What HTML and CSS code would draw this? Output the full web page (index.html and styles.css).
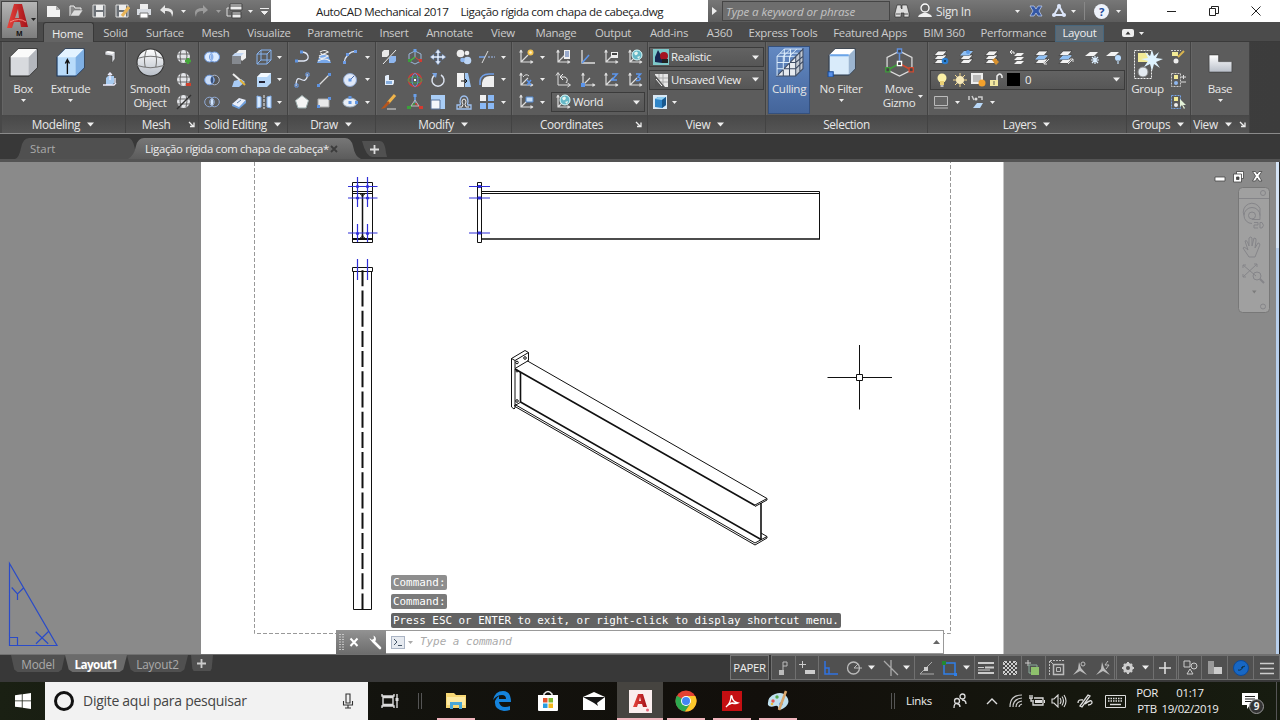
FILE: index.html
```
<!DOCTYPE html>
<html lang="pt-BR">
<head>
  <meta charset="UTF-8">
  <title>AutoCAD Mechanical 2017</title>
  <link rel="stylesheet" href="styles.css">
</head>
<body>
  <!-- Icon sprite -->
  <svg class="sprite">
    <defs>
      <linearGradient id="silver" x2="0" y2="1"><stop offset="0" stop-color="#fff"/><stop offset="1" stop-color="#b9bfc9"/></linearGradient>
      <linearGradient id="red" x2="1" y2="0"><stop offset="0" stop-color="#e8453c"/><stop offset="1" stop-color="#a3121a"/></linearGradient>
    </defs>
    <symbol id="arr" viewBox="0 0 7 7"><path d="M1 2h5L3.500 5z" fill="#eee"/></symbol>
    <symbol id="arrb" viewBox="0 0 9 9"><path d="M1 2.500h7L4.500 6.500z" fill="#eee"/></symbol>
    <symbol id="launch" viewBox="0 0 8 8"><path d="M1 2l4 4M6 2.500v4H2" stroke="#eee" stroke-width="1.300" fill="none"/></symbol>
    <symbol id="box" viewBox="0 0 28 28"><path d="M1 9L9 1h18v18l-8 8H1z" fill="#d8dade" stroke="#222"/><path d="M1 9L9 1h18l-8 8z" fill="#fafafa"/><path d="M19 9l8-8v18l-8 8z" fill="#b4b7bd"/></symbol>
    <symbol id="extrude" viewBox="0 0 28 28"><path d="M1 9L9 1h18v18l-8 8H1z" fill="#b8dbfa" stroke="#16345c"/><path d="M1 9L9 1h18l-8 8z" fill="#e4f3ff"/><path d="M19 9l8-8v18l-8 8z" fill="#7fb0e4"/><path d="M11 25V12M9 15l2-4 2 4" stroke="#111" stroke-width="1.300" fill="none"/></symbol>
    <symbol id="sphere" viewBox="0 0 28 28"><circle cx="14" cy="14" r="13" fill="url(#silver)" stroke="#333"/><path d="M2 10q12-4 24 0M1 17q13 4 26 0M10 2q-3 8-1 17M18 2q3 8 1 17" stroke="#777" fill="none"/></symbol>
    <symbol id="poly" viewBox="0 0 16 16"><path d="M3 3l3-1 7 1v7l-3 4V7L3 6z" fill="#d6d8dd" stroke="#444" stroke-width=".6"/><path d="M3 3l3-1 7 1-3 2z" fill="#fff"/></symbol>
    <symbol id="presspull" viewBox="0 0 16 16"><path d="M4 6l2-2h6v7l-2 2H4z" fill="#a8cbf0"/><path d="M8 8V1M6 3l2-2 2 2M1 13h11l2-2M13 6v5" stroke="#eef" stroke-width="1.300" fill="none"/></symbol>
    <symbol id="mesh" viewBox="0 0 16 16"><circle cx="7.500" cy="7.500" r="6.500" fill="#e4e6ea"/><path d="M1 5h13M1 10h13M5 1q-2 6 0 12M10 1q2 6 0 12" stroke="#666" fill="none"/></symbol>
    <symbol id="meshadd" viewBox="0 0 16 16"><use href="#mesh"/><path d="M12 9v6M9 12h6" stroke="#45a83a" stroke-width="2.500"/></symbol>
    <symbol id="meshsub" viewBox="0 0 16 16"><use href="#mesh"/><path d="M10 12.500h5" stroke="#d0402c" stroke-width="3"/></symbol>
    <symbol id="meshcut" viewBox="0 0 16 16"><use href="#mesh"/><path d="M1 15L15 1" stroke="#333" stroke-width="1.500"/></symbol>
    <symbol id="union" viewBox="0 0 16 16"><circle cx="5.500" cy="8" r="5" fill="#dcebff" stroke="#6f9be0"/><circle cx="10.500" cy="8" r="5" fill="#dcebff" stroke="#6f9be0"/><path d="M8 4q-3 4 0 8q3-4 0-8" fill="#8bb0ea"/></symbol>
    <symbol id="subtract" viewBox="0 0 16 16"><circle cx="10.500" cy="8" r="4.800" fill="#555" stroke="#a9b4c8"/><circle cx="5.500" cy="8" r="4.800" fill="#c9dcf7" stroke="#6f9be0"/><path d="M8 4q-3 4 0 8q3-4 0-8" fill="#35507f"/></symbol>
    <symbol id="intersect" viewBox="0 0 16 16"><g fill="none" stroke="#8fa9d4"><circle cx="5.500" cy="8" r="4.800"/><circle cx="10.500" cy="8" r="4.800"/></g><path d="M8 4q-3 4 0 8q3-4 0-8" fill="#cfe4ff"/></symbol>
    <symbol id="offsetface" viewBox="0 0 16 16"><path d="M5 4l3-3h7v8l-4 3z" fill="#f2f2f2"/><path d="M1 7h9v8H1z" fill="#85898f"/><path d="M1 7l3-3h9l-3 3z" fill="#c4d8f3"/></symbol>
    <symbol id="slice" viewBox="0 0 16 16"><path d="M3 9l7-2 4 3-6 5H1z" fill="#a8cbf5"/><path d="M2 2l8 7" stroke="#eee" stroke-width="2"/><path d="M9 8l5 5" stroke="#e0b23a" stroke-width="2"/></symbol>
    <symbol id="thicken" viewBox="0 0 16 16"><path d="M1 10l7-6 7 2-7 8z" fill="#e8eefa"/><path d="M1 10l7 3 7-7v3l-7 6-7-3z" fill="#6fa0de"/><path d="M6 9l4-3" stroke="#68a"/></symbol>
    <symbol id="wirebox" viewBox="0 0 16 16"><path d="M1 5h10v10H1zM5 1h10v10H5zM1 5l4-4M11 5l4-4M11 15l4-4M1 15l4-4" stroke="#86b3ef" fill="none"/></symbol>
    <symbol id="shell" viewBox="0 0 16 16"><path d="M1 5l4-4h10v10l-4 4H1z" fill="#b6d6f7"/><path d="M1 5l4-4h10l-4 4z" fill="#f3f9ff"/><path d="M3 9h6v2H3z" fill="#223"/></symbol>
    <symbol id="separate" viewBox="0 0 16 16"><path d="M1 2l4 1v10l-4 1zM11 3l4-1v12l-4-1z" fill="#d7eaff" stroke="#86b3ef"/><path d="M8 1v14" stroke="#eee" stroke-dasharray="3 1"/></symbol>
    <symbol id="polyline" viewBox="0 0 16 16"><path d="M2 12h8q5-1 4-5t-7-4" stroke="#dfe6f5" stroke-width="1.300" fill="none"/><path d="M1 10.500h3v3H1zM6 1.500h3v3H6z" fill="#5f94e2"/></symbol>
    <symbol id="spline" viewBox="0 0 16 16"><path d="M2 14q0-9 4-7t5 1q3-2 2-6" stroke="#dfe6f5" stroke-width="1.300" fill="none"/><path d="M1 12h3v3H1zM12 1h3v3h-3z" fill="none" stroke="#6d9ce6"/></symbol>
    <symbol id="pentagon" viewBox="0 0 16 16"><path d="M8 1.500l6.500 5-2.500 7.500H4L1.500 6.500z" fill="#f4f4f4" stroke="#9aa"/></symbol>
    <symbol id="helix" viewBox="0 0 16 16"><path d="M4 6h8l3 8H1z" fill="#78a8ea"/><path d="M4 3q5-3 8 0-7 4-7 1M3 7q6-3 9 0-7 4-9 1M2 12q7-4 12 0" stroke="#eee" fill="none" stroke-width="1.200"/></symbol>
    <symbol id="line" viewBox="0 0 16 16"><path d="M2 14L14 2" stroke="#ddd" stroke-width="1.300"/><path d="M1 12h3v3H1zM12 1h3v3h-3z" fill="#5f94e2"/></symbol>
    <symbol id="rect" viewBox="0 0 16 16"><path d="M2 5h11v8H2z" fill="#e8e8e8" stroke="#aaa"/><path d="M1 11h3v3H1zM12 3h3v3h-3z" fill="#5f94e2"/></symbol>
    <symbol id="arc" viewBox="0 0 16 16"><path d="M2 14Q4 3 14 2" stroke="#d8e3f7" fill="none" stroke-width="1.300"/><path d="M1 12h3v3H1zM4 4h3v3H4zM12 1h3v3h-3z" fill="#6d9ce6"/></symbol>
    <symbol id="circle" viewBox="0 0 16 16"><circle cx="8" cy="8" r="6.500" fill="#dfe8f8" stroke="#8da6cf"/><path d="M8 8l4-4" stroke="#46a"/><path d="M6.500 6.500h3v3h-3z" fill="#5f94e2"/></symbol>
    <symbol id="ellipse" viewBox="0 0 16 16"><ellipse cx="8" cy="8.500" rx="7" ry="4.500" fill="#e9eef6" stroke="#9ab"/><path d="M6.500 7h3v3h-3zM6.500 2h3v3h-3zM13 7h3v3h-3z" fill="#5f94e2"/></symbol>
    <symbol id="m1" viewBox="0 0 16 16"><path d="M1 3l2-2h5v5L6 8H1z" fill="#e8e8e8"/><path d="M8 9l2-2h5v5l-2 2H8z" fill="#8fb7ef"/><path d="M2 15L15 1" stroke="#eee"/></symbol>
    <symbol id="m2" viewBox="0 0 16 16"><path d="M4 4l2-1h2v5h5v3l-1 2H4z" fill="#e3edfa"/><path d="M5 9h6v3H5z" fill="#86aede"/></symbol>
    <symbol id="m3" viewBox="0 0 16 16"><path d="M14 1L7 9" stroke="#f0b44a" stroke-width="3"/><path d="M7 7l2 2-5 5-4 1z" fill="#b8551c"/><path d="M6 15h9" stroke="#ddd"/></symbol>
    <symbol id="gmove" viewBox="0 0 16 16"><path d="M8 2l6 3v7l-6 3-6-3V5zM8 2v6" fill="none" stroke="#9ab8da"/><path d="M8 8l5 4" stroke="#d44"/><path d="M8 8l-5 4" stroke="#4b4" stroke-width="1.500"/><path d="M6.500 0h3v3h-3z" fill="#6aa0ea"/><path d="M1 10h3v3H1z" fill="#3aa03a"/><path d="M12 10h3v3h-3z" fill="#d43a30"/></symbol>
    <symbol id="grot" viewBox="0 0 16 16"><circle cx="8" cy="8" r="6.500" stroke="#cc3c3c" stroke-width="1.500" fill="none"/><ellipse cx="8" cy="8" rx="7" ry="3" stroke="#3faa4b" fill="none"/><ellipse cx="8" cy="8" rx="3" ry="6.500" stroke="#678bd4" fill="none"/><path d="M7 7h2v2H7z" fill="#fff"/></symbol>
    <symbol id="gscale" viewBox="0 0 16 16"><path d="M8 2v7" stroke="#6aa0ea" stroke-width="1.500"/><path d="M8 9l6 5" stroke="#d43a30" stroke-width="1.500"/><path d="M8 9l-6 5" stroke="#3aa03a" stroke-width="1.500"/><path d="M8 6l-4 6h8z" stroke="#bbb" fill="none"/><path d="M6.500 0h3v3h-3z" fill="#6aa0ea"/><path d="M0 12h4v3H0z" fill="#3aa03a"/><path d="M12 12h4v3h-4z" fill="#d43a30"/></symbol>
    <symbol id="move" viewBox="0 0 16 16"><path d="M8 0l3 4H9v3h3V5l4 3-4 3V9H9v3h2l-3 4-3-4h2V9H4v2L0 8l4-3v2h3V4H5z" fill="#dfe9f8" stroke="#48699b" stroke-width=".5"/></symbol>
    <symbol id="rotate" viewBox="0 0 16 16"><path d="M5 3a6 6 0 1 0 6 0" fill="none" stroke="#dbe2ee" stroke-width="1.500"/><path d="M2 1l5 0-1 5z" fill="#79a5e6"/></symbol>
    <symbol id="scale" viewBox="0 0 16 16"><path d="M1 1h14v14H1z" fill="#a9cdf6"/><path d="M1 6h9v9H1z" fill="#f3f7fc" stroke="#57739b"/></symbol>
    <symbol id="copy" viewBox="0 0 16 16"><circle cx="4.500" cy="4.500" r="3.800" fill="#eee"/><circle cx="11.500" cy="11.500" r="3.800" fill="#bcd5f4"/><circle cx="11" cy="4" r="2.300" fill="#eee"/><circle cx="6.500" cy="11" r="2.300" fill="#8fb7ef"/></symbol>
    <symbol id="mirror" viewBox="0 0 16 16"><path d="M1 1h7v14H1z" fill="#f3f3f3"/><path d="M9 1h3l3 14H9z" fill="#9fc6f2"/><path d="M5 9h6M9 7l2 2-2 2" stroke="#111" fill="none"/></symbol>
    <symbol id="offset" viewBox="0 0 16 16"><path d="M1 15v-4h3q1-1 0-3 0-6 4-6t4 6q-1 2 0 3h3v4z" fill="none" stroke="#9fc2f2" stroke-width="1.300"/><path d="M3 13h3q2-3 0-5 0-3 2-3t2 3q-2 2 0 5h3" fill="none" stroke="#eee"/></symbol>
    <symbol id="trim" viewBox="0 0 16 16"><path d="M0 8h6" stroke="#6f9fe8" stroke-width="1.500"/><path d="M3 14L9 2" stroke="#ddd"/><path d="M9 8h7" stroke="#9fbdf0" stroke-dasharray="2 1"/></symbol>
    <symbol id="fillet" viewBox="0 0 16 16"><path d="M3 15V11q1-7 8-7h4v11z" fill="#eee"/><path d="M1 13V9q1-7 9-7h5" stroke="#6f9fe8" fill="none" stroke-width="1.500"/></symbol>
    <symbol id="array" viewBox="0 0 16 16"><path d="M1 9h6v6H1zM9 9h6v6H9zM9 1h6v6H9z" fill="#8ab8f4"/><path d="M1 1h6v6H1z" fill="#f0f0f0"/></symbol>
    <symbol id="ucs" viewBox="0 0 16 16"><path d="M3 1v12h12M3 13l7-7" stroke="#ddd" fill="none" stroke-width="1.200"/><path d="M1 3.500L3 .5 5 3.500zM12.500 11l3 2-3 2z" fill="#ddd"/></symbol>
    <symbol id="ucsnew" viewBox="0 0 16 16"><use href="#ucs"/><circle cx="12.500" cy="3.500" r="3" fill="#f5c44e"/><circle cx="12.500" cy="3.500" r="1.300" fill="#fff3c8"/></symbol>
    <symbol id="ucsx" viewBox="0 0 16 16"><use href="#ucs"/><path d="M9 8l4 5M13 8l-4 5" stroke="#5b95ec" stroke-width="1.500"/><path d="M5 5q3-4 6-1" stroke="#ddd" fill="none"/></symbol>
    <symbol id="ucsview" viewBox="0 0 16 16"><use href="#ucs"/><path d="M8 3h7v5H8z" fill="#c5def8" stroke="#58c"/></symbol>
    <symbol id="ucsnamed" viewBox="0 0 16 16"><use href="#ucs"/><path d="M9 1h6v9H9z" fill="#eee"/><path d="M10 3h4M10 5h4M10 7h4" stroke="#46a"/></symbol>
    <symbol id="ucsprev" viewBox="0 0 16 16"><path d="M3 1v12h12M1 3.500L3 .5 5 3.500M12.500 11l3 2-3 2" stroke="#ddd" fill="none"/><path d="M6 5h4q4 2 1 6M8 2L5 5l3 3" stroke="#eee" fill="none"/></symbol>
    <symbol id="ucsline" viewBox="0 0 16 16"><path d="M2 1v13h13" stroke="#ddd" fill="none" stroke-width="1.300"/><path d="M2 14L9 6" stroke="#5b95ec" stroke-width="1.500"/></symbol>
    <symbol id="ucsorg" viewBox="0 0 16 16"><use href="#ucs"/><path d="M1 11h4v4H1z" fill="#5b95ec"/></symbol>
    <symbol id="ucsface" viewBox="0 0 16 16"><use href="#ucs"/><path d="M8 3h7v6H8z" fill="#eee"/><path d="M9 4h5v2H9z" fill="#444"/></symbol>
    <symbol id="ucsz" viewBox="0 0 16 16"><use href="#ucs"/><path d="M9 2h5L9 8h5" stroke="#5b95ec" stroke-width="1.600" fill="none"/></symbol>
    <symbol id="ucs3" viewBox="0 0 16 16"><use href="#ucs"/><path d="M9 2h4.500L11 5q4 1 1 3.500H9" stroke="#5b95ec" stroke-width="1.600" fill="none"/></symbol>
    <symbol id="ucsworld" viewBox="0 0 16 16"><use href="#ucs"/><circle cx="10" cy="6" r="5" fill="#65b7c6" stroke="#dff"/><path d="M7 4q3-3 4 0-1 3-3 2zM10 8l3-1-1 3z" fill="#e3f4ee"/></symbol>
    <symbol id="realistic" viewBox="0 0 16 16"><path d="M0 0h16v16H0z" fill="#7ec9ca"/><path d="M2 13V8l3-7 4 7v6z" fill="#16254f"/><circle cx="11" cy="7" r="4" fill="#a51520"/><path d="M9 10h6v4H9z" fill="#222"/></symbol>
    <symbol id="grid" viewBox="0 0 16 16"><path d="M2 2h13v13H2z" fill="#e6e6e6"/><path d="M6 2v13M10 2v13M2 6h13M2 10h13" stroke="#aaa"/><path d="M2 3l10 12H2z" fill="#555"/><path d="M3 7l6 7" stroke="#fff"/></symbol>
    <symbol id="vcube" viewBox="0 0 16 16"><path d="M1 1h14v14H1z" fill="#d9e9f5"/><path d="M3 5l3-2h8v8l-4 3-7-1z" fill="#2f86c9"/><path d="M3 5l3-2h8l-4 3z" fill="#8fd0f5"/><path d="M10 6v8l4-3V3z" fill="#18598f"/></symbol>
    <symbol id="cull" viewBox="0 0 28 28"><path d="M2 27L20 8l7-7v19l-7 7z" fill="#e6eaf0"/><path d="M20 8l7-7v19l-7 7z" fill="#c3c9d2"/><path d="M8 21v6M14 15v12M20 8v19M8 20h12l7-7M14 14h6l7-6M2 27L27 1v19l-7 7zM24 4v19" fill="none" stroke="#3c4a62"/><path d="M2 8v19M8 8v13M14 8v6M2 8h17M2 14h12M2 20h6M2 8l7-7h17M8 8l7-7M14 8l7-7M5 5h17M9 1v12M15 1v8" stroke="#e4f3ff" fill="none" stroke-width=".9"/></symbol>
    <symbol id="nofilter" viewBox="0 0 28 28"><path d="M2 7l6-6h19v19l-6 6H2z" fill="#d9ebfa" stroke="#29384d"/><path d="M2 7l6-6h19l-6 6z" fill="#fff"/><path d="M21 7l6-6v19l-6 6z" fill="#9cb5d0"/><path d="M3 7h18" stroke="#6ba5e8" stroke-width="2"/><path d="M1 23h5v5H1z" fill="#5a92ea" stroke="#174a96"/></symbol>
    <symbol id="gizmo" viewBox="0 0 28 28"><path d="M14 3l12 6v12l-12 6-12-6V9z" fill="none" stroke="#ddd" stroke-width="1.200"/><path d="M14 3v12" stroke="#6090dc" stroke-width="1.500"/><path d="M14 15L3 21" stroke="#3f9c3c" stroke-width="1.500"/><path d="M14 15l11 6" stroke="#d04a30" stroke-width="1.500"/><g fill="#444" stroke-width="1.300"><path d="M12 1h4v4h-4z" stroke="#6090dc"/><path d="M12 13h4v4h-4z" stroke="#fff"/><path d="M0.700 19h4v4h-4z" stroke="#3f9c3c"/><path d="M23.300 19h4v4h-4z" stroke="#d04a30"/></g></symbol>
    <symbol id="lay" viewBox="0 0 16 16"><g fill="#f2f2f2" stroke="#333" stroke-width=".7"><path d="M1 14.500l4-4.500h9l-4 4.500z"/><path d="M1 10.500l4-4.500h9l-4 4.500z"/><path d="M1 6.500l4-4.500h9l-4 4.500z"/></g></symbol>
    <symbol id="layprop" viewBox="0 0 16 16"><use href="#lay"/><circle cx="12" cy="12" r="3.300" fill="#2c7fd2"/><circle cx="12" cy="12" r="1" fill="#134"/></symbol>
    <symbol id="laycur" viewBox="0 0 16 16"><use href="#lay"/><path d="M1 6.500l4-4.500h9l-4 4.500z" fill="#8fc0f5"/><circle cx="9" cy="3" r="2" fill="#5c9ae6"/></symbol>
    <symbol id="laymatch" viewBox="0 0 16 16"><use href="#lay"/><path d="M8 11l3-2 4 4-3 3z" fill="#d8912f"/></symbol>
    <symbol id="layprev" viewBox="0 0 16 16"><path d="M5 15l3-3h7l-3 3zM5 11l3-3h7l-3 3zM5 7l3-3h7l-3 3z" fill="#f2f2f2"/><path d="M5 5V3H1M3 1L1 3l2 2" stroke="#eee" fill="none"/></symbol>
    <symbol id="layiso" viewBox="0 0 16 16"><use href="#lay"/><path d="M1 10.500l4-4h9l-4 4z" fill="#8fc0f5"/><path d="M15 10l-5 5M10 12v3h3" stroke="#ddd" fill="none"/></symbol>
    <symbol id="layun" viewBox="0 0 16 16"><use href="#lay"/><path d="M1 10.500l4-4h9l-4 4z" fill="#8fc0f5"/><path d="M10 15l5-5M12 10h3v3" stroke="#ddd" fill="none"/></symbol>
    <symbol id="layfrz" viewBox="0 0 16 16"><path d="M1 7l5-4h8l-4 4z" fill="#f2f2f2"/><path d="M11 7v8M7 11h8M8 8l6 6M14 8l-6 6" stroke="#dbeeff" stroke-width="1.200"/></symbol>
    <symbol id="layoff" viewBox="0 0 16 16"><path d="M0 7l5-4h8l-4 4z" fill="#f2f2f2"/><circle cx="12" cy="9" r="3" fill="#b9dcff"/><path d="M12 11v4" stroke="#9ab" stroke-width="2"/></symbol>
    <symbol id="bulb" viewBox="0 0 16 16"><circle cx="8" cy="6" r="4.500" fill="#fbf0a6"/><path d="M6 9h4v4H6z" fill="#e9cf75"/><path d="M6.500 13h3v2h-3z" fill="#bbb"/></symbol>
    <symbol id="sun" viewBox="0 0 16 16"><path d="M8 1v14M1 8h14M3 3l10 10M13 3L3 13" stroke="#f5d98a"/><circle cx="8" cy="8" r="4" fill="#f7e9b8"/></symbol>
    <symbol id="vpfrz" viewBox="0 0 16 16"><path d="M2 2h10v9H2z" fill="#bbb" stroke="#eee" stroke-width="2"/><circle cx="12" cy="11" r="3.500" fill="#f2a02c"/></symbol>
    <symbol id="lock" viewBox="0 0 16 16"><path d="M2 8h8v6H2z" fill="#f2e7a0"/><path d="M9 8V4q3-4 5 0v2" fill="none" stroke="#eee" stroke-width="1.500"/><path d="M6 9v4" stroke="#665"/></symbol>
    <symbol id="screen" viewBox="0 0 16 16"><path d="M1.500 2.500h13v9h-13z" fill="#666" stroke="#bbb"/><path d="M1 14h14" stroke="#bbb"/></symbol>
    <symbol id="laywalk" viewBox="0 0 16 16"><path d="M1 6V2M4 2l2 4M10 3h4v3" stroke="#ccc" stroke-width="1.500" fill="none"/><path d="M5 14l4-5h6l-3 5z" fill="#b9d8f8"/><circle cx="8" cy="5" r="1.500" fill="#ddd"/></symbol>
    <symbol id="group" viewBox="0 0 32 32"><path d="M2.500 2.500h17v28h-17z" fill="none" stroke="#eee" stroke-dasharray="2 1"/><path d="M6 5h10v9H6z" fill="#f2ea96"/><circle cx="11" cy="24" r="5" fill="#e4eaf0" stroke="#888"/><path d="M20 2l2 6 5-4-3 6 7 1-7 3 4 6-6-4-2 7-2-7-6 3 4-6-7-2 7-1-3-6 5 4z" fill="#dff3ff"/></symbol>
    <symbol id="ungroup" viewBox="0 0 16 16"><path d="M2 3h6v4H2z" fill="#f2ea96"/><path d="M1 1.500h10" stroke="#ccc" stroke-dasharray="2 1"/><circle cx="6" cy="12" r="2.500" fill="#eee"/><path d="M8 8l6-6" stroke="#d8b44e" stroke-width="2"/></symbol>
    <symbol id="gredit" viewBox="0 0 16 16"><path d="M1.500 1.500h9v13h-9z" fill="none" stroke="#ccc" stroke-dasharray="2 1"/><path d="M4 3h4v4H4z" fill="#f2ea96"/><circle cx="6" cy="11" r="2" fill="#8fb7ef"/><path d="M11 5h5M13.500 3v4M11 10h5" stroke="#ddd"/></symbol>
    <symbol id="grsel" viewBox="0 0 16 16"><path d="M1.500 1.500h9v13h-9z" fill="none" stroke="#75a4e8" stroke-dasharray="2 1"/><path d="M4 3h4v4H4z" fill="#f2ea96"/><circle cx="6" cy="11" r="2" fill="#eee"/><path d="M10 5v8l2-2 2 4 1-1-2-3h3z" fill="#e3f1d8"/></symbol>
    <symbol id="base" viewBox="0 0 26 20"><path d="M1 1h10v7h14v11H1z" fill="url(#silver)" stroke="#333" stroke-width=".6"/></symbol>
    <symbol id="new" viewBox="0 0 16 16"><path d="M1 3h9l4 4v7H1z" fill="#f2f2f2"/><path d="M10 3v4h4z" fill="#aaa"/></symbol>
    <symbol id="open" viewBox="0 0 16 16"><path d="M2 13V3h4l1 2h6v3" fill="#888" stroke="#eee"/><path d="M2 13l4-6h9l-4 6z" fill="#ddd" stroke="#666" stroke-width=".5"/></symbol>
    <symbol id="save" viewBox="0 0 16 16"><path d="M2 2h12v12H2z" fill="#6b7076" stroke="#ddd"/><path d="M5 2h7v5H5zM5 9h7v5H5z" fill="#ececec"/></symbol>
    <symbol id="saveas" viewBox="0 0 16 16"><use href="#save"/><path d="M15 4l-7 9" stroke="#e9b559" stroke-width="3"/></symbol>
    <symbol id="print" viewBox="0 0 16 16"><path d="M4 1h8v5H4z" fill="#eee"/><path d="M1 6h14v6H1z" fill="#d8dce2"/><path d="M4 10h8v5H4z" fill="#fff" stroke="#777"/></symbol>
    <symbol id="undo" viewBox="0 0 16 16"><path d="M6 2L1 7l5 4V8q7-1 7 6 4-9-7-9z" fill="#e6e6e6"/></symbol>
    <symbol id="wspace" viewBox="0 0 18 16"><path d="M4 1h12v6H4zM6 9h9v6H6z" fill="#eee" stroke="#444"/><path d="M4 3h12M6 11h9" stroke="#444"/><path d="M3 5H1v8h4" stroke="#ddd" fill="none"/></symbol>
    <symbol id="scalefig" viewBox="0 0 16 16"><path d="M7 2l2 6 6 7-7-4-7 4 5-6z" fill="#bbb"/><circle cx="11" cy="4" r="2" fill="none" stroke="#bbb"/></symbol>
    <symbol id="scaleauto" viewBox="0 0 16 16"><path d="M7 2l2 6 6 7-7-4-7 4 5-6z" fill="#bbb"/><path d="M13 1l-3 4h4l-3 4" fill="none" stroke="#bbb"/></symbol>
  </svg>

  <div class="app-button">
    <svg width="38" height="38" viewBox="0 0 38 38"><path d="M6 27L13 3h8l6 23h-7l-1-5h-6l-2 6zM14 17h4l-1-9z" fill="url(#red)"/><path d="M9 21q9-5 16 0" stroke="#f58a80" fill="none"/><path d="M30 17h5l-2.500 3z" fill="#222"/></svg>
    <b>M</b>
  </div>

  <header class="titlebar">
    <div class="quick">
      <svg class="i"><use href="#new"/></svg><svg class="i"><use href="#open"/></svg><svg class="i"><use href="#save"/></svg><svg class="i"><use href="#saveas"/></svg><svg class="i"><use href="#print"/></svg><svg class="i"><use href="#undo"/></svg><svg class="a"><use href="#arr"/></svg><svg class="i redo"><use href="#undo"/></svg><svg class="a redo"><use href="#arr"/></svg><svg class="i ws"><use href="#wspace"/></svg><svg class="a"><use href="#arr"/></svg><svg class="b" viewBox="0 0 9 9"><path d="M0 1.500h9M1.500 4.500h6L4.500 7.500z" stroke="#eee" fill="#eee"/></svg>
    </div>
    <div class="doc-title"><span>AutoCAD Mechanical 2017</span><span>Ligação rígida com chapa de cabeça.dwg</span></div>
    <div class="info-center">
      <svg class="play" viewBox="0 0 5 8"><path d="M0 0l5 4-5 4z" fill="#eee"/></svg>
      <div class="keyword">Type a keyword or phrase</div>
      <svg class="i" viewBox="0 0 16 16"><path d="M3 2h4v3l1 1V2h5l2 8v4h-5v-4H7v4H1v-4z" fill="#ddd" stroke="#333" stroke-width=".7"/><path d="M2 11h4M10 11h4" stroke="#555"/></svg>
      <svg class="i" viewBox="0 0 16 16"><circle cx="8" cy="5" r="4" fill="#666" stroke="#fff" stroke-width="1.300"/><path d="M1 14h14l-1-2-4-2H6l-4 2z" fill="#eee"/></svg>
      <span class="signin">Sign In</span>
      <svg class="a"><use href="#arr"/></svg>
      <svg class="i" viewBox="0 0 16 16"><path d="M2 3h4l2 3 2-3h4l-3 5 3 5h-4l-2-3-2 3H2l3-5z" fill="#3457a5" stroke="#b8c8ea" stroke-width=".8"/></svg>
      <svg class="i" viewBox="0 0 16 16"><path d="M8 3l5 9H3z" fill="none" stroke="#dce6fa" stroke-width="2"/><circle cx="8" cy="3" r="2" fill="#dce6fa"/><circle cx="3" cy="12" r="2" fill="#dce6fa"/><circle cx="13" cy="12" r="2" fill="#dce6fa"/></svg>
      <svg class="a"><use href="#arr"/></svg>
      <i class="rule"></i>
      <span class="help">?</span>
      <svg class="a"><use href="#arr"/></svg>
    </div>
    <div class="win-buttons">
      <svg viewBox="0 0 10 10"><path d="M0 5.500h9"/></svg>
      <svg viewBox="0 0 10 10"><path d="M.5 2.500h6v7h-6zM2.500 2.500v-2h7v7h-3"/></svg>
      <svg viewBox="0 0 10 10"><path d="M.5.500l9 9M9.500.500l-9 9"/></svg>
    </div>
  </header>

  <nav class="tabs">
    <span class="active">Home</span><span>Solid</span><span>Surface</span><span>Mesh</span><span>Visualize</span><span>Parametric</span><span>Insert</span><span>Annotate</span><span>View</span><span>Manage</span><span>Output</span><span>Add-ins</span><span>A360</span><span>Express Tools</span><span>Featured Apps</span><span>BIM 360</span><span>Performance</span><span class="context">Layout</span>
    <span class="mini"><svg width="12" height="8" viewBox="0 0 12 8"><rect width="12" height="8" rx="2" fill="#eee"/><path d="M3.500 5.500h5L6 2.500z" fill="#333"/></svg><svg class="a"><use href="#arr"/></svg></span>
  </nav>

  <div class="ribbon">
    <section class="panel modeling">
      <div class="body">
        <div class="big"><svg><use href="#box"/></svg>Box<svg class="a"><use href="#arr"/></svg></div>
        <div class="big"><svg><use href="#extrude"/></svg>Extrude<svg class="a"><use href="#arr"/></svg></div>
        <div class="cells"><svg class="i"><use href="#poly"/></svg><svg class="i"><use href="#presspull"/></svg></div>
      </div>
      <footer>Modeling <svg class="b"><use href="#arrb"/></svg></footer>
    </section>
    <section class="panel mesh">
      <div class="body">
        <div class="big"><svg><use href="#sphere"/></svg>Smooth<br>Object</div>
        <div class="cells"><svg class="i"><use href="#meshadd"/></svg><svg class="i"><use href="#meshsub"/></svg><svg class="i"><use href="#meshcut"/></svg></div>
      </div>
      <footer>Mesh<svg class="launch"><use href="#launch"/></svg></footer>
    </section>
    <section class="panel solid">
      <div class="body cells">
        <svg class="i"><use href="#union"/></svg><svg class="i"><use href="#offsetface"/></svg><svg class="i"><use href="#wirebox"/></svg><svg class="a"><use href="#arr"/></svg>
        <svg class="i"><use href="#subtract"/></svg><svg class="i"><use href="#slice"/></svg><svg class="i"><use href="#shell"/></svg><svg class="a"><use href="#arr"/></svg>
        <svg class="i"><use href="#intersect"/></svg><svg class="i"><use href="#thicken"/></svg><svg class="i"><use href="#separate"/></svg><svg class="a"><use href="#arr"/></svg>
      </div>
      <footer>Solid Editing <svg class="b"><use href="#arrb"/></svg></footer>
    </section>
    <section class="panel draw">
      <div class="body cells">
        <svg class="i"><use href="#polyline"/></svg><svg class="i"><use href="#helix"/></svg><svg class="i"><use href="#arc"/></svg><svg class="a"><use href="#arr"/></svg>
        <svg class="i"><use href="#spline"/></svg><svg class="i"><use href="#line"/></svg><svg class="i"><use href="#circle"/></svg><svg class="a"><use href="#arr"/></svg>
        <svg class="i"><use href="#pentagon"/></svg><svg class="i"><use href="#rect"/></svg><svg class="i"><use href="#ellipse"/></svg><svg class="a"><use href="#arr"/></svg>
      </div>
      <footer>Draw <svg class="b"><use href="#arrb"/></svg></footer>
    </section>
    <section class="panel modify">
      <div class="body cells">
        <svg class="i"><use href="#m1"/></svg><svg class="i"><use href="#gmove"/></svg><svg class="i"><use href="#move"/></svg><svg class="i"><use href="#copy"/></svg><svg class="i"><use href="#trim"/></svg><svg class="a"><use href="#arr"/></svg>
        <svg class="i"><use href="#m2"/></svg><svg class="i"><use href="#grot"/></svg><svg class="i"><use href="#rotate"/></svg><svg class="i"><use href="#mirror"/></svg><svg class="i"><use href="#fillet"/></svg><svg class="a"><use href="#arr"/></svg>
        <svg class="i"><use href="#m3"/></svg><svg class="i"><use href="#gscale"/></svg><svg class="i"><use href="#scale"/></svg><svg class="i"><use href="#offset"/></svg><svg class="i"><use href="#array"/></svg><svg class="a"><use href="#arr"/></svg>
      </div>
      <footer>Modify <svg class="b"><use href="#arrb"/></svg></footer>
    </section>
    <section class="panel coords">
      <div class="body cells">
        <svg class="i"><use href="#ucsnew"/></svg><svg class="a"><use href="#arr"/></svg><svg class="i"><use href="#ucsnamed"/></svg><svg class="i"><use href="#ucsline"/></svg><svg class="i"><use href="#ucsface"/></svg><svg class="i"><use href="#ucsworld"/></svg>
        <svg class="i"><use href="#ucsx"/></svg><svg class="a"><use href="#arr"/></svg><svg class="i"><use href="#ucsprev"/></svg><svg class="i"><use href="#ucsorg"/></svg><svg class="i"><use href="#ucsz"/></svg><svg class="i"><use href="#ucs3"/></svg>
        <svg class="i"><use href="#ucsview"/></svg><svg class="a"><use href="#arr"/></svg>
        <div class="combo"><svg class="i"><use href="#ucsworld"/></svg><span>World</span><svg class="b"><use href="#arrb"/></svg></div>
      </div>
      <footer>Coordinates<svg class="launch"><use href="#launch"/></svg></footer>
    </section>
    <section class="panel view">
      <div class="body cells">
        <div class="combo"><svg class="i"><use href="#realistic"/></svg><span>Realistic</span><svg class="b"><use href="#arrb"/></svg></div>
        <div class="combo"><svg class="i"><use href="#grid"/></svg><span>Unsaved View</span><svg class="b"><use href="#arrb"/></svg></div>
        <div class="row"><svg class="i"><use href="#vcube"/></svg><svg class="a"><use href="#arr"/></svg></div>
      </div>
      <footer>View <svg class="b"><use href="#arrb"/></svg></footer>
    </section>
    <section class="panel selection">
      <div class="body">
        <div class="big on"><svg><use href="#cull"/></svg>Culling</div>
        <div class="big"><svg><use href="#nofilter"/></svg>No Filter<svg class="a"><use href="#arr"/></svg></div>
        <div class="big"><svg><use href="#gizmo"/></svg>Move<br>Gizmo</div>
        <svg class="a side"><use href="#arr"/></svg>
      </div>
      <footer>Selection</footer>
    </section>
    <section class="panel layers">
      <div class="body cells">
        <div class="row tools"><svg class="i"><use href="#layprop"/></svg><svg class="i"><use href="#laycur"/></svg><svg class="i"><use href="#laymatch"/></svg><svg class="i"><use href="#layprev"/></svg><svg class="i"><use href="#layiso"/></svg><svg class="i"><use href="#layun"/></svg><svg class="i"><use href="#layfrz"/></svg><svg class="i"><use href="#layoff"/></svg></div>
        <div class="combo"><svg class="i"><use href="#bulb"/></svg><svg class="i"><use href="#sun"/></svg><svg class="i"><use href="#vpfrz"/></svg><svg class="i"><use href="#lock"/></svg><i class="swatch"></i><span>0</span><svg class="b"><use href="#arrb"/></svg></div>
        <div class="row state"><svg class="i"><use href="#screen"/></svg><svg class="a"><use href="#arr"/></svg><svg class="i"><use href="#laywalk"/></svg><svg class="a"><use href="#arr"/></svg></div>
      </div>
      <footer>Layers <svg class="b"><use href="#arrb"/></svg></footer>
    </section>
    <section class="panel groups">
      <div class="body">
        <div class="big"><svg><use href="#group"/></svg>Group</div>
        <div class="cells"><svg class="i"><use href="#ungroup"/></svg><svg class="i"><use href="#gredit"/></svg><svg class="i"><use href="#grsel"/></svg></div>
      </div>
      <footer>Groups <svg class="b"><use href="#arrb"/></svg></footer>
    </section>
    <section class="panel baseview">
      <div class="body"><div class="big"><svg><use href="#base"/></svg>Base<svg class="a"><use href="#arr"/></svg></div></div>
      <footer>View <svg class="b"><use href="#arrb"/></svg><svg class="launch"><use href="#launch"/></svg></footer>
    </section>
  </div>

  <div class="file-tabs">
    <div class="ftab start">Start</div>
    <div class="ftab current">Ligação rígida com chapa de cabeça*<svg width="8" height="8" viewBox="0 0 8 8"><path d="M1 1l6 6M7 1L1 7" stroke="#3c3c3c" stroke-width="1.800"/></svg></div>
    <div class="ftab plus"><svg width="9" height="9" viewBox="0 0 9 9"><path d="M4.500 0v9M0 4.500h9" stroke="#ddd" stroke-width="1.800"/></svg></div>
  </div>

  <main class="viewport">
    <svg class="drawing" width="1280" height="492" viewBox="0 162 1280 492">
      <rect x="201" y="162" width="802.500" height="492" fill="#fff"/>
      <path d="M254.500 162V633.500H950.500V162" fill="none" stroke="#999" stroke-dasharray="4 2"/>
      <!-- Section view -->
      <g fill="none" stroke="#111">
        <path d="M352.500 182.500h20v60h-20zM352.500 191.500h20M352.500 193.500h20M352.500 238.500h20M352.500 239.500h20"/>
        <path d="M362.500 193v46" stroke-width="1.500"/>
        <path d="M360 194q2 0 2.500 3 .5-3 2.500-3M360 238q2 0 2.500-3 .5 3 2.500 3"/>
        <!-- Side view -->
        <path d="M477.500 182.500h4v60h-4zM481.500 191.500h338v47.500M481.500 193.500h338"/>
        <path d="M481 239h339" stroke-width="1.700"/>
        <!-- Plan view -->
        <path d="M352.500 267.500h20v4h-20zM353.500 271.500v338h18v-338"/>
        <path d="M362.500 270.300V609" stroke-width="2" stroke-dasharray="16 4.200"/>
        <!-- Isometric view -->
        <path d="M511.500 358.500L525 350.500l3.500 2v8L515 368.500V408l-1 1-2.500-2zM511.500 358.500l3.500 2 13.500-8M515 360.500v8"/>
        <path d="M527 360.700L767 498.500v1.500l-12 6.500"/>
        <path d="M515 369l240 136.500M520.500 402l240.500 137.500" stroke-width="1.600"/>
        <path d="M755 505l12-6.500M515 404.500l240 138.500 12-6.500-6-3.500M515 406.500l240 138.500 12-7v-1.500M514 406l7-4"/>
        <path d="M520.500 372v30M761 503v36.500" stroke-width="1.600"/>
        <circle cx="517" cy="362.500" r="1.300"/><circle cx="525" cy="358" r="1.300"/><circle cx="517" cy="371" r="1"/><circle cx="517" cy="401" r="1.300"/>
      </g>
      <g stroke="#3030d8" fill="none" stroke-width="1.200">
        <path d="M357.500 177v30M367.500 177v30M357.500 224v18M367.500 224v18M357.500 259v21M367.500 259v21M348 186.500h29.500M348 198h29.500M348 233h29.500M469 186.500h21M469 198h21M469 233h21"/>
        <path d="M478 186.500h3M478 198h3M478 233h3M357 269.500h1M367 269.500h1" stroke-width="3"/>
        <g fill="#3030d8"><circle cx="357.500" cy="186.500" r="1"/><circle cx="367.500" cy="186.500" r="1"/><circle cx="357.500" cy="198" r="1"/><circle cx="367.500" cy="198" r="1"/><circle cx="357.500" cy="233.500" r="1"/><circle cx="367.500" cy="233.500" r="1"/></g>
      </g>
      <!-- UCS triangle -->
      <path d="M9.500 563.500v82H57zM9.500 637.500h8v8M11.700 587.500l5.800 6.500 6-6M17.500 594v6M35.700 631.700l12.500 12M36 643.700l13-12.700" fill="none" stroke="#2a4bc8" stroke-width="1.200"/>
      <!-- Cursor -->
      <path d="M827.500 377.500h29M862.500 377.500h29.500M859.500 345v29.500M859.500 380.500v29M856.500 374.500h6v6h-6z" fill="none" stroke="#111"/>
      <!-- Document window buttons -->
      <g fill="#fff" stroke="#444" stroke-width=".8"><path d="M1215 177h10v4h-10z"/><path d="M1236.500 171.500h7v7h-7z"/><path d="M1233.500 174h8v8h-8z"/><path d="M1236.500 177h2.500v2.500h-2.500z" fill="#444"/><path d="M1252.500 171.500h3l1.700 2.500 1.700-2.500h3l-3 4.500 3 5h-3l-1.700-3-1.700 3h-3l3-5z"/></g>
      <rect x="1276" y="162" width="3" height="492" fill="#b8cfec"/><path d="M1276 162h3v86h-3z" fill="#d5e4f6"/><path d="M1279.500 162v492" stroke="#222"/>
      <!-- Navigation bar -->
      <rect x="1238.500" y="187.500" width="31" height="125" rx="4" fill="#a0a0a0" stroke="#787878"/>
      <g fill="none" stroke="#858589"><path d="M1239 198.500h30"/><circle cx="1263" cy="193" r="2.500"/><circle cx="1263" cy="306.500" r="2.500"/><path d="M1260 215.500a8 8 0 1 0-8 8M1244 215.500a8 8 0 0 1 16-7v11h-8"/><circle cx="1252" cy="215.500" r="3.500"/><path d="M1254 222.500h4v2.500h-4v3h4M1260 222.500h2q3 3 0 5.500h-2z"/><path d="M1249 257l-6-9q1-2 5 2l-3-9q2-2 4 5v-8q2-2 3 0v8l2-8q3 0 2 3l-1 7 3-5q3 0 1 4l-4 10z"/><path d="M1243 265l13 11M1243 277l14-13M1243 268v-3h3M1254 264h3v3M1243 274v3h3"/><circle cx="1257" cy="276" r="4"/><path d="M1260 279l4 4" stroke-width="2"/></g>
      <path d="M1252 290.500h4.500l-2.200 3z" fill="#7c7c7c"/>
    </svg>
    <div class="history">
      <span class="h1">Command:</span>
      <span class="h2">Command:</span>
      <span class="h3">Press ESC or ENTER to exit, or right-click to display shortcut menu.</span>
    </div>
    <div class="command">
      <div class="grip"><svg width="50" height="24" viewBox="0 0 50 24"><path d="M4 4v16M7 4v16" stroke="#ddd" stroke-dasharray="1 1.500" stroke-width="1.500"/><path d="M14.500 8.500l7 7.500M21.500 8.500l-7 7.500" stroke="#fff" stroke-width="2"/><path d="M37 11l7 7" stroke="#fff" stroke-width="2.600" stroke-linecap="round"/><path d="M33.500 8a4 4 0 0 0 6 3 4 4 0 0 0-2-5.500l.5 3-2 1.500z" fill="#fff"/></svg></div>
      <svg class="prompt" width="24" height="13" viewBox="0 0 24 13"><rect x=".5" y=".5" width="13" height="12" fill="#e6eaf0" stroke="#aab4c4"/><path d="M3 3l3 3-3 3M7 9.500h4" stroke="#456" fill="none"/><path d="M17 5h5l-2.500 3z" fill="#aaa"/></svg>
      <span>Type a command</span>
      <svg width="7" height="5" viewBox="0 0 7 5"><path d="M0 4h7L3.500 0z" fill="#666"/></svg>
    </div>
  </main>

  <div class="statusbar">
    <div class="layout-tabs"><span>Model</span><span class="active">Layout1</span><span>Layout2</span><span class="plus"><svg width="9" height="9" viewBox="0 0 9 9"><path d="M4.500 0v9M0 4.500h9" stroke="#ccc" stroke-width="1.800"/></svg></span></div>
    <div class="paper">PAPER</div>
    <div class="status-icons">
      <span><svg class="i" viewBox="0 0 16 16"><path d="M8 13V2h4v4H8" fill="none" stroke="#bbb"/><path d="M4 10h5v5H4z" fill="#bbb"/></svg></span>
      <span><svg class="i" viewBox="0 0 16 16"><path d="M3.500 1v7M0 4.500h7" stroke="#ccc"/><path d="M6 10h10v4H6z" fill="#ccc"/></svg></span>
      <span class="none"><svg class="i" viewBox="0 0 16 16"><path d="M3 1v13h13M3 8h4v6" stroke="#2f72e0" stroke-width="1.500" fill="none"/></svg></span>
      <span class="none wide"><svg class="i" viewBox="0 0 16 16"><circle cx="7.500" cy="8" r="6" fill="none" stroke="#bbb" stroke-width="1.300"/><path d="M8 8h8M8 8l4-4" stroke="#bbb"/></svg><svg class="b"><use href="#arrb"/></svg></span>
      <span class="wide iso"><svg class="i" viewBox="0 0 16 16"><path d="M1 1l14 14M8 0v16" stroke="#aaa" stroke-width="1.300"/></svg><svg class="b"><use href="#arrb"/></svg></span>
      <span class="none"><svg class="i" viewBox="0 0 16 16"><path d="M14 2L2 14h14" stroke="#aaa" fill="none"/><path d="M6 7h4v4H6z" fill="#ccc"/></svg></span>
      <span class="wide"><svg class="i" viewBox="0 0 16 16"><path d="M3 3h11v11H3z" fill="none" stroke="#2f7fe8" stroke-width="1.500"/><path d="M1 1h4v4H1z" fill="#25882e"/><path d="M13 13h3v3h-3z" fill="#2f7fe8"/></svg><svg class="b"><use href="#arrb"/></svg></span>
      <span><svg class="i" viewBox="0 0 16 16"><path d="M0 3h16M7 7.500h9M0 13h16" stroke="#ccc" stroke-width="2"/><path d="M0 7.500h6M0 10h12" stroke="#ccc"/></svg></span>
      <span><svg class="i" viewBox="0 0 16 16"><path d="M1 1h14v14H1z" fill="#ccc"/><path d="M1 1l14 14M1 5l10 10M5 1l10 10M1 9l6 6M9 1l6 6M15 1L1 15M11 1L1 11M15 5L5 15M7 1L1 7M15 9l-6 6" stroke="#444"/></svg></span>
      <span><svg class="i" viewBox="0 0 16 16"><path d="M3 0v6M0 3h6" stroke="#ccc"/><path d="M4 5h8v8H4z" fill="none" stroke="#8a9"/><path d="M6 7h8v8H6z" fill="#8ec06c"/></svg></span>
      <span class="none"><svg class="i" viewBox="0 0 16 16"><path d="M.5 15V.5H15" stroke="#bbb" fill="none" stroke-dasharray="2 1"/><path d="M4.500 4.500h10v10h-10z" stroke="#bbb" stroke-width="1.500" fill="none"/><path d="M7.500 7.500h4v4h-4zM1 1l4 4" stroke="#bbb" fill="none"/></svg></span>
      <span class="none"><svg class="i"><use href="#scalefig"/></svg></span>
      <span class="end"><svg class="i"><use href="#scaleauto"/></svg></span>
      <span class="wide"><svg class="i" viewBox="0 0 16 16"><circle cx="8" cy="8" r="3.500" fill="none" stroke="#ccc" stroke-width="3"/><path d="M8 2v2M8 12v2M2 8h2M12 8h2M4 4l1 1M11 11l1 1M12 4l-1 1M5 11l-1 1" stroke="#ccc" stroke-width="2"/></svg><svg class="b"><use href="#arrb"/></svg></span>
      <span class="end"><svg class="i" viewBox="0 0 16 16"><path d="M8 2v12M2 8h12" stroke="#ddd" stroke-width="1.600"/></svg></span>
      <span><svg class="i" viewBox="0 0 16 16"><path d="M2 1h6v6H2zM5 14l3-5 3 5z" fill="none" stroke="#ccc"/><circle cx="12" cy="6" r="3" fill="#555" stroke="#ccc"/></svg></span>
      <span><svg class="i" viewBox="0 0 16 16"><path d="M1 1h6v13H1z" fill="#999"/><path d="M7 7h8v7H7z" fill="#ccc"/></svg></span>
      <span><svg class="i" viewBox="0 0 16 16"><circle cx="8" cy="8" r="7.500" fill="#1767c4" stroke="#0c4a9a"/><path d="M5 10q4 1 5-4M8 8l4-2" stroke="#134" fill="none"/></svg></span>
      <span><svg class="i" viewBox="0 0 16 16"><path d="M1 3.500h14M1 8.500h14M1 13.500h14" stroke="#ccc" stroke-width="1.500"/></svg></span>
    </div>
  </div>

  <footer class="taskbar">
    <div class="start-btn"><svg width="16" height="16" viewBox="0 0 16 16"><path d="M0 2.300L6.800 1.300V7.500H0zM7.600 1.200L16 0v7.500H7.600zM0 8.300h6.800v6.300L0 13.700zM7.600 8.300H16V16l-8.400-1.200z" fill="#fff"/></svg></div>
    <div class="search"><i class="cortana"></i><span>Digite aqui para pesquisar</span><svg width="12" height="16" viewBox="0 0 12 16"><path d="M4 1h4v9H4zM1.500 8v4h9V8M6 12v3M3 15h6" fill="none" stroke="#333" stroke-width="1.100"/></svg></div>
    <div class="app tv"><svg width="18" height="16" viewBox="0 0 18 16"><path d="M2 4.500h10v7H2zM1 1v2h12V1M1 15v-2h12v2M16 1v14" stroke="#ddd" fill="none" stroke-width="1.400"/><path d="M14.500 5h3v3h-3z" fill="#ddd"/></svg></div>
    <i class="sep"></i>
    <div class="app run"><svg width="22" height="20" viewBox="0 0 22 20"><path d="M1 2h8l2 2h10v13H1z" fill="#f7d774"/><path d="M2 6h18v8H2z" fill="#fdeaa3"/><path d="M5 18v-7h12v7h-3v-4H8v4z" fill="#49a7d8"/></svg></div>
    <div class="app"><svg width="20" height="20" viewBox="0 0 20 20"><path d="M1 9Q3 0 11 0t8 11H7q1 5 6 5 3 0 5-1v4q-3 1-6 1-10-1-9-10 1-3 4-5 0 3 0 3h7q0-4-4-4-5 0-9 5z" fill="#1583dc"/></svg></div>
    <div class="app"><svg width="22" height="22" viewBox="0 0 22 22"><path d="M7 6V4q4-5 8 0v2" fill="none" stroke="#eee" stroke-width="1.500"/><path d="M1 5h20v15q0 1-1 1H2q-1 0-1-1z" fill="#fff"/><path d="M6 8h4.500v4.500H6z" fill="#e5532d"/><path d="M11.500 8H16v4.500h-4.500z" fill="#7db72f"/><path d="M6 13.500h4.500V18H6z" fill="#2a9de0"/><path d="M11.500 13.500H16V18h-4.500z" fill="#f3b71c"/></svg></div>
    <div class="app"><svg width="24" height="18" viewBox="0 0 24 18"><path d="M1 5l11-5 11 5v13H1z" fill="#fff"/><path d="M1 5h22l-8 6 1 3-4-3z" fill="#151515"/></svg></div>
    <div class="app run on"><svg width="23" height="23" viewBox="0 0 23 23"><path d="M0 0h23v23H0z" fill="#fbeeee"/><path d="M4 17L9 4h5l4 13h-4l-1-3H9l-1 3zM10 11h2l-1-4z" fill="url(#red)"/><circle cx="18.500" cy="20" r="1.500" fill="#e8667a"/></svg></div>
    <div class="app run"><svg width="22" height="22" viewBox="0 0 22 22"><circle cx="11" cy="11" r="10.500" fill="#e34133"/><path d="M1.900 5.700A10.500 10.500 0 0 0 10 21.500L15.500 13.500 11 11z" fill="#2da94f"/><path d="M11 6h9.200A10.500 10.500 0 0 1 10 21.500l5.500-8z" fill="#fdc92b"/><circle cx="11" cy="11" r="5" fill="#fff"/><circle cx="11" cy="11" r="4" fill="#4285f4"/></svg></div>
    <div class="app run"><svg width="20" height="20" viewBox="0 0 20 20"><path d="M0 0h20v20H0z" fill="#c40f12"/><path d="M4 16q5-4 5-11 1-1 1 1 1 5 6 6-2 1-6 0-4 1-6 4z" fill="none" stroke="#fff" stroke-width="1.300"/></svg></div>
    <div class="app run"><svg width="22" height="22" viewBox="0 0 22 22"><path d="M1 15Q0 7 8 4t12 3-3 11q-4 3-6 1 1-4-3-3-5 2-7-1z" fill="#bfe0ef"/><circle cx="6" cy="11" r="1.700" fill="#e2574c"/><circle cx="10" cy="7" r="1.700" fill="#57a84d"/><circle cx="14" cy="14" r="1.700" fill="#3a70c8"/><circle cx="5" cy="14" r="1.300" fill="#e9bd3f"/><path d="M19 1l-7 19" stroke="#d9a56a" stroke-width="2.500"/></svg></div>
    <div class="tray">
      <i class="sep"></i>
      <span class="links">Links</span>
      <svg class="t1" width="14" height="16" viewBox="0 0 14 16"><g fill="none" stroke="#ddd" stroke-width="1.300"><circle cx="9.500" cy="3.500" r="2.500"/><circle cx="4" cy="8" r="2.500"/><path d="M1 15q0-5 3-4.500T7 14M9 7q4 0 4 4"/></g></svg>
      <svg class="t2" width="12" height="7" viewBox="0 0 12 7"><path d="M1 6l5-5 5 5" stroke="#ddd" fill="none" stroke-width="1.400"/></svg>
      <svg class="t3" width="14" height="14" viewBox="0 0 14 14"><path d="M1 13Q1 1 13 1M4 13q0-8 9-9M7 13q0-5 6-6M10 13q0-2 3-3" stroke="#ccc" fill="none" stroke-width="1.200"/></svg>
      <svg class="t4" width="16" height="12" viewBox="0 0 16 12"><path d="M5 3h9v7H4V7M0 3h4M1 0v2M3 0v2M2 3v3h3" stroke="#ddd" fill="none" stroke-width="1.300"/><path d="M6 5h7v3H6zM15 5h1v3h-1z" fill="#ddd"/></svg>
      <svg class="t5" width="16" height="14" viewBox="0 0 16 14"><path d="M1 5h2l4-4v12L3 9H1zM9 4q2 3 0 6M11 2.500q3 4 0 9M13 1q4 6 0 12" stroke="#ddd" fill="none" stroke-width="1.100"/></svg>
      <svg class="t6" width="16" height="14" viewBox="0 0 16 14"><path d="M3 12L11 1l2 1-8 11zM1 9q0-4 5-3M8 10q7-6 7-1-1 2-4 2" stroke="#ddd" fill="none" stroke-width="1.300"/></svg>
      <svg class="t7" width="21" height="13" viewBox="0 0 21 13"><path d="M.5.500h20v12H.5z" stroke="#ddd" fill="none"/><path d="M3 3.500h15M3 6h15" stroke="#ddd" stroke-dasharray="1.500 1" stroke-width="1.500"/><path d="M5 9.500h11" stroke="#ddd" stroke-width="1.400"/></svg>
      <div class="lang">POR<br>PTB</div>
      <div class="clock">01:17<br>19/02/2019</div>
      <div class="notes"><svg width="16" height="16" viewBox="0 0 16 16"><path d="M0 0h16v12H8l-3 4v-4H0z" fill="#fff"/><path d="M3 3.500h10M3 6h10M3 8.500h7" stroke="#222"/></svg><b>9</b></div>
    </div>
    <i class="peek"></i>
  </footer>
</body>
</html>
```

FILE: styles.css
```
* {
  box-sizing: border-box;
}

body {
  margin: 0;
  width: 1280px;
  height: 720px;
  overflow: hidden;
  position: relative;
  display: flex;
  flex-direction: column;
  background: #383838;
  color: #e6e6e6;
  font: 11.4px/14px "Open Sans", "Noto Sans", sans-serif;
  letter-spacing: -0.35px;
  white-space: nowrap;
}

svg {
  display: block;
  flex: none;
}

.sprite {
  position: absolute;
  width: 0;
  height: 0;
}

.i { width: 16px; height: 16px; }
.a { width: 7px; height: 7px; }
.b { width: 9px; height: 9px; }
.launch { width: 8px; height: 8px; }

/* Title bar */
.app-button {
  position: absolute;
  left: 1px;
  top: 1px;
  width: 37px;
  height: 38px;
  z-index: 2;
  background: linear-gradient(#b5b5b5, #7d7d7d);
  border: 1px solid #444;
  text-align: center;
}

.app-button svg { margin: -1px; }

.app-button b {
  position: absolute;
  left: 14px;
  bottom: 0;
  font-size: 7px;
  line-height: 9px;
  color: #111;
}

.titlebar {
  height: 22px;
  flex: none;
  display: flex;
  background: linear-gradient(#777, #5c5c5c);
}

.quick {
  width: 271px;
  padding-left: 46px;
  display: grid;
  grid-template-columns: 16px 28px 18px 27px 18px 28px 4px 32px 2px 31px 1px 26px;
  justify-items: center;
  align-items: center;
}

.quick .ws { width: 18px; }
.redo { opacity: 0.4; }
.i.redo { transform: scaleX(-1); }

.doc-title {
  width: 437px;
  background: #fff;
  color: #222;
  line-height: 23px;
  font-size: 11.6px;
  letter-spacing: -0.42px;
  padding-left: 45px;
  display: flex;
  gap: 12px;
}

.info-center {
  width: 419px;
  display: flex;
  align-items: center;
}

.play { width: 5px; height: 8px; margin: 0 5px 0 4px; }

.keyword {
  width: 168px;
  height: 20px;
  margin-right: 4px;
  padding-left: 3px;
  background: #6e6e6e;
  border: 1px solid #454545;
  color: #c4c4c4;
  font-style: italic;
  font-size: 11.6px;
  letter-spacing: -0.1px;
  line-height: 19px;
}

.info-center .i { margin-right: 7px; }
.signin { width: 74px; margin-left: -4px; font-size: 12px; padding-top: 2px; margin-right: 1px; }
.info-center .a { margin: 0 7px 0 3px; }
.info-center .i + .a { margin: 0 7px 0 -4px; }
.rule { width: 1px; height: 18px; background: #888; margin-right: 9px; }

.help {
  width: 15px;
  height: 15px;
  border-radius: 50%;
  background: #eef2fa;
  color: #234a9b;
  font-weight: 700;
  line-height: 15px;
  text-align: center;
}

.info-center .help + .a { margin: 0 0 0 6px; }

.win-buttons {
  width: 153px;
  background: #fff;
  display: grid;
  grid-template-columns: 44px 40px 44px;
  padding-left: 23px;
  padding-bottom: 1px;
  justify-items: center;
  align-items: center;
}

.win-buttons svg {
  width: 10px;
  height: 10px;
  fill: none;
  stroke: #222;
}

/* Ribbon tabs */
.tabs {
  height: 20px;
  flex: none;
  display: grid;
  grid-template-columns: 49px 47px 52px 49px 58px 74px 44px 67px 40px 66px 48px 64px 37px 90px 84px 64px 75px 55px 50px;
  padding-left: 43px;
  background: #4b4b4b;
  border-bottom: 1px solid #3a3a3a;
  color: #ccc;
  text-align: center;
  line-height: 22px;
  letter-spacing: -0.28px;
}

.tabs .active {
  margin-right: -2px;
  padding-right: 2px;
  background: #646464;
  border: 1px solid #383838;
  border-bottom: 0;
  border-radius: 3px 3px 0 0;
  color: #eee;
  line-height: 21px;
  height: 20px;
}

.tabs .context {
  margin: 3px 2px 2px 4px;
  line-height: 14px;
  background: #5d6a74;
  border: 1px solid #47667c;
  color: #eee;
}

.mini {
  display: flex;
  align-items: center;
  gap: 4px;
  padding-left: 16px;
}

/* Ribbon panels */
.ribbon {
  height: 92px;
  flex: none;
  display: flex;
  padding-left: 2px;
  background: linear-gradient(90deg, #484848, #3c3c3c);
  border-bottom: 1px solid #8a8a8a;
}

.panel {
  display: flex;
  flex-direction: column;
  background: #5c5c5c;
  border-right: 1px solid #434343;
  box-shadow: inset 1px 0 #656565;
}

.body {
  height: 73px;
  padding-top: 4px;
  display: flex;
}

.panel footer {
  height: 18px;
  display: flex;
  align-items: center;
  justify-content: center;
  gap: 6px;
  background: linear-gradient(#484848, #555);
  color: #e8e8e8;
  font-size: 11.8px;
}

.cells {
  display: grid;
  grid-auto-rows: 22.5px;
  align-content: start;
  align-items: center;
  justify-items: center;
}

.big {
  display: flex;
  flex-direction: column;
  align-items: center;
  text-align: center;
  padding-top: 2px;
  font-size: 11.6px;
}

.big > svg:first-child {
  width: 29px;
  height: 29px;
  margin-bottom: 5px;
}

.big .a { margin-top: 1px; }

.combo {
  display: flex;
  align-items: center;
  height: 20px;
  background: linear-gradient(#636363, #565656);
  border: 1px solid #3b3b3b;
  color: #eee;
  padding: 0 3px;
  gap: 2px;
}

.combo span { flex: 1; }
.row { display: flex; align-items: center; }

.modeling { width: 124px; }
.modeling .big:nth-child(1) { width: 42px; }
.modeling .big:nth-child(2) { width: 53px; }
.modeling .cells { padding-left: 5px; }

.mesh { width: 73px; }
.mesh .big { width: 48px; }
.mesh .cells { padding-left: 2px; }
.mesh footer { padding-left: 14px; gap: 18px; }

.solid { width: 89px; }
.solid .body { grid-template-columns: 26px 27px 23px 9px; }

.draw { width: 88px; }
.draw .body { grid-template-columns: 22px 21px 31px 5px; padding-left: 3px; }

.modify { width: 136px; }
.modify .body { grid-template-columns: 26px 25px 21px 31px 15px 18px; }

.coords { width: 136px; }
.coords .body { grid-template-columns: 27px 6px 35px 16px 30px 17px; }
.coords .combo { grid-column: 3 / 7; width: 94px; justify-self: end; margin-right: -2px; }
.coords footer { justify-content: flex-end; gap: 32px; padding-right: 4px; }

.view { width: 118px; }
.view .cells { justify-items: start; padding-left: 1px; }
.view .combo { width: 115px; }
.view .row { gap: 3px; padding-left: 3px; }
.view footer { padding-right: 2px; }

.selection { width: 162px; }
.selection .body { padding-left: 2px; }
.selection .on {
  width: 42px;
  height: 68px;
  background: linear-gradient(#6389c2, #44659b);
  border: 1px solid #35507c;
  padding-top: 1px;
}
.selection .big:nth-child(2) { width: 62px; }
.selection .big:nth-child(3) { width: 54px; }
.side { margin-top: 47px; margin-left: -9px; }

.layers { width: 199px; }
.layers .body { justify-items: start; }
.tools {
  display: grid;
  grid-template-columns: 26px 26px 24px 26px 24px 23px 29px 16px;
  justify-items: center;
}
.layers .combo { width: 195px; margin-left: 2px; }
.swatch { width: 13px; height: 13px; background: #000; margin: 0 3px 0 1px; }
.state {
  display: grid;
  grid-template-columns: 26px 7px 29px 4px;
  justify-items: center;
}

.groups { width: 64px; }
.groups .big { width: 41px; }
.groups .big > svg:first-child { width: 32px; height: 32px; margin: 0 0 2px; }
.groups .cells { padding-left: 2px; }

.baseview { width: 59px; }
.baseview .big { width: 60px; }
.baseview .big > svg:first-child { width: 25px; height: 19px; margin: 6px 0 9px; }

/* Drawing tabs */
.file-tabs {
  height: 28px;
  flex: none;
  display: flex;
  align-items: flex-start;
  padding: 4px 0 0 15px;
  background: #383838;
  border-bottom: 3px solid #545454;
}

.ftab { height: 21px; line-height: 22px; }

.start {
  width: 125px;
  padding-left: 15px;
  background: #505050;
  color: #aaa;
  letter-spacing: 0;
  clip-path: path("M0 21Q4 20 6 10Q8 0 14 0H114Q120 2 121 21Z");
}

.current {
  width: 233px;
  margin-left: -12px;
  padding: 0 23px 0 17px;
  display: flex;
  align-items: center;
  justify-content: space-between;
  background: linear-gradient(#777, #5c5c5c);
  color: #eee;
  clip-path: path("M0 21Q6 18 8 8Q10 0 16 0H217Q223 0 225 8Q227 19 233 21Z");
}

.ftab.plus {
  width: 25px;
  height: 16px;
  margin: 3px 0 0 1px;
  padding: 4px 0 0 8px;
  background: #505050;
  clip-path: path("M0 0H18Q23 0 24 12L25 16H10Q4 15 0 0Z");
}

/* Drawing area */
.viewport {
  height: 492px;
  flex: none;
  position: relative;
  background: #8a8a8a;
}

.history {
  position: absolute;
  left: 391px;
  top: 413px;
  display: flex;
  flex-direction: column;
  align-items: flex-start;
  gap: 4px;
  font: 10.9px/16px "DejaVu Sans Mono", monospace;
  letter-spacing: 0;
}

.history span {
  height: 15px;
  padding: 0 2px;
  border-radius: 2px;
  color: #fff;
}

.h1 { background: #8e8e8e; }
.h2 { background: #7a7a7a; }
.h3 { background: #636363; }

.command {
  position: absolute;
  left: 336px;
  top: 468px;
  width: 608px;
  height: 24px;
  display: flex;
  align-items: center;
  background: #fff;
  border: 1px solid #999;
  border-left: 0;
  padding-right: 3px;
  color: #aaa;
  font: italic 10.9px/22px "DejaVu Sans Mono", monospace;
  letter-spacing: 0;
}

.command span { flex: 1; margin-left: 5px; }
.grip { height: 24px; background: linear-gradient(#929292, #6d6d6d); }
.prompt { margin-left: 5px; }

/* Layout tabs and status bar */
.statusbar {
  height: 28px;
  flex: none;
  display: flex;
  background: #383838;
  border-top: 1px solid #707070;
}

.layout-tabs {
  width: 730px;
  display: flex;
  padding-left: 11px;
  font-size: 11.8px;
  line-height: 18px;
  letter-spacing: -0.2px;
  color: #aaa;
  text-align: center;
}

.layout-tabs span {
  width: 54px;
  height: 17px;
  background: #505050;
  clip-path: polygon(0 0, 100% 0, 94% 85%, 88% 100%, 12% 100%, 6% 85%);
}

.layout-tabs .active {
  width: 62px;
  background: #6b6b6b;
  color: #fff;
  font-weight: 700;
  letter-spacing: -0.65px;
}

.layout-tabs .active + span { width: 61px; }

.layout-tabs .plus {
  width: 22px;
  margin-left: 3px;
  padding: 4px 0 0 6px;
  height: 16px;
}

.paper {
  width: 39px;
  height: 25px;
  background: #4b4b4b;
  border: 1px solid #777;
  color: #eee;
  text-align: center;
  line-height: 24px;
}

.status-icons {
  display: flex;
  height: 25px;
  margin-left: 2px;
  background: #505050;
  border: 1px solid #707070;
  border-width: 1px 0 1px 1px;
}

.status-icons span {
  width: 23.5px;
  display: flex;
  align-items: center;
  justify-content: center;
  border-right: 1px solid #707070;
}

.status-icons .wide { width: 37px; gap: 5px; }
.status-icons .iso { width: 35px; gap: 3px; }
.status-icons .none { border-right-color: transparent; }
.status-icons .end { width: 24.5px; border-right: 3px double #707070; }
.status-icons span:nth-last-child(-n+3) { width: 26px; }

/* Windows taskbar */
.taskbar {
  height: 38px;
  flex: none;
  display: flex;
  align-items: stretch;
  background: linear-gradient(90deg, #1a2013, #13130e 30%, #120f0b 60%, #171c10);
}

.start-btn {
  width: 45px;
  display: flex;
  align-items: center;
  justify-content: center;
}

.search {
  width: 323px;
  padding: 0 14px 0 9px;
  display: flex;
  align-items: center;
  background: #f2f2f2;
  color: #444;
  font-size: 14px;
  letter-spacing: -0.28px;
}

.search span { flex: 1; margin-left: 9px; }

.cortana {
  width: 20px;
  height: 20px;
  border: 3px solid #111;
  border-radius: 50%;
}

.app {
  width: 46px;
  display: flex;
  align-items: center;
  justify-content: center;
}

.tv { width: 43px; }
.run {
  background: linear-gradient(#f0b5bd, #f0b5bd) center bottom / 38px 2px no-repeat;
}
.run.on { background-color: #464440; background-size: 46px 2px; }

.sep {
  width: 4px;
  height: 16px;
  border: 1px solid #555;
  border-width: 0 1px;
  align-self: center;
}

.taskbar > .sep { margin: 0 11px 0 7px; }

.tray {
  margin-left: 90px;
  display: flex;
  align-items: center;
  color: #eee;
}

.links { width: 27px; margin: 0 20px 0 11px; letter-spacing: -0.25px; }
.t2 { margin-left: 19px; }
.t3 { margin-left: 11px; }
.t4 { margin-left: 6px; }
.t5 { margin-left: 6px; }
.t6 { margin-left: 10px; }
.t7 { margin-left: 12px; }

.lang, .clock {
  line-height: 16px;
  text-align: center;
}

.lang { width: 24px; margin-left: 9px; }
.clock { width: 58px; margin-left: 2px; }

.notes {
  position: relative;
  margin-left: 23px;
}

.notes b {
  position: absolute;
  left: 7px;
  top: 6px;
  width: 15px;
  height: 15px;
  border-radius: 50%;
  background: #333;
  border: 1px solid #999;
  font-size: 10px;
  line-height: 13px;
  text-align: center;
}

.peek {
  width: 1px;
  margin-left: auto;
  margin-right: 3px;
  background: #555;
}
```
